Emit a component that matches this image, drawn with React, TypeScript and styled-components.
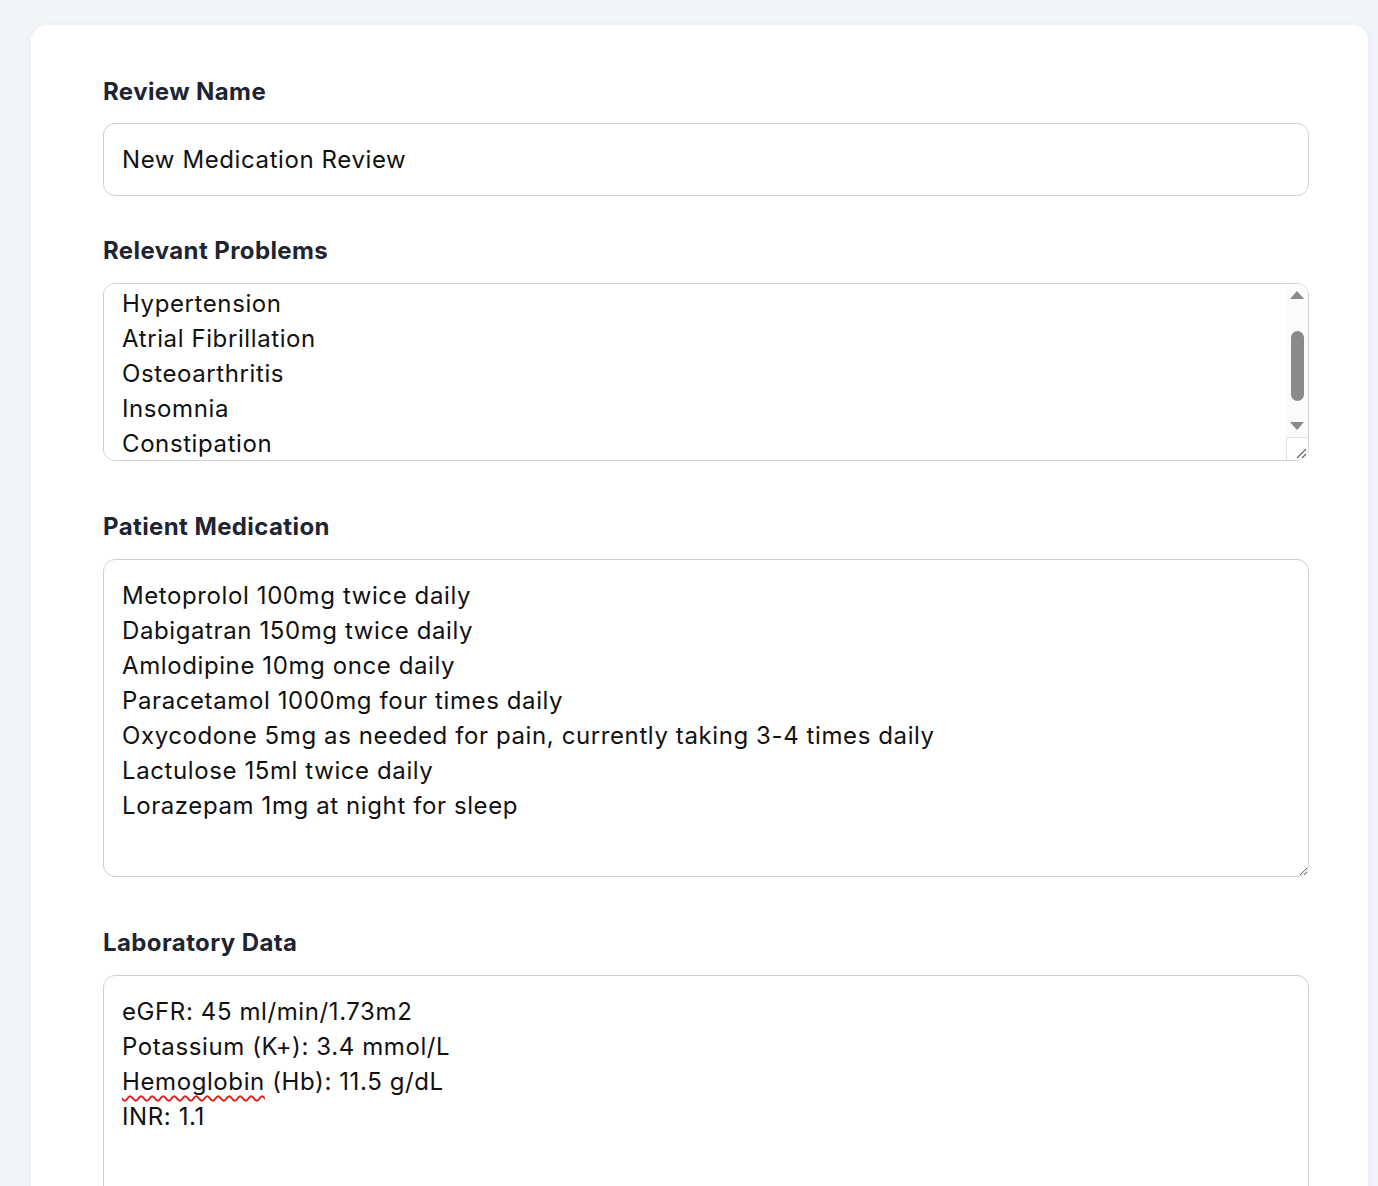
import React, { useEffect, useRef } from 'react'
import styled, { createGlobalStyle } from 'styled-components'

const GlobalStyle = createGlobalStyle`
  html, body {
    margin: 0;
    padding: 0;
    background: #f1f5f9;
    font-family: Inter, "Noto Sans", sans-serif;
    overflow: hidden;
  }
`

const Page = styled.div`
  min-height: 1186px;
  padding: 25px 10px 0 31px;
  box-sizing: border-box;
`

const Card = styled.div`
  background: #ffffff;
  border-radius: 16px 16px 0 0;
  box-shadow: 0 2px 10px rgba(15, 23, 42, 0.05);
  padding: 50px 59px 0 72px;
  min-height: 1161px;
  box-sizing: border-box;
`

const Field = styled.div`
  display: flex;
  flex-direction: column;
  margin-bottom: 38px;
`

const Label = styled.label`
  font-size: 24px;
  line-height: 33px;
  font-weight: 700;
  color: #1e2432;
  margin-bottom: 15px;
  letter-spacing: 0.4px;
`

const fieldText = `
  font-family: inherit;
  font-size: 24px;
  letter-spacing: 0.6px;
  color: #111;
`

const TextInput = styled.input`
  ${fieldText}
  height: 73px;
  box-sizing: border-box;
  border: 1px solid #cfcfcf;
  border-radius: 12px;
  padding: 0 18px;
  outline: none;
`

const ScrollWrap = styled.div`
  position: relative;
`

const TextArea = styled.textarea<{ $height?: number }>`
  ${fieldText}
  display: block;
  width: 100%;
  box-sizing: border-box;
  height: ${p => (p.$height ? `${p.$height}px` : 'auto')};
  border: 1px solid #cfcfcf;
  border-radius: 12px;
  padding: 18px 18px;
  line-height: 35px;
  outline: none;
  margin: 1px 0 11px;
  resize: vertical;
`

/* drawn scrollbar: the screenshot browser hides native ones */
const Rail = styled.div`
  position: absolute;
  top: 2px;
  right: 1px;
  width: 22px;
  height: 176px;
  display: flex;
  flex-direction: column;
  align-items: center;
  background: #fbfbfb;
  border-top-right-radius: 11px;
  pointer-events: none;
`

const ArrowButton = styled.div<{ $down?: boolean }>`
  height: 22px;
  width: 100%;
  display: flex;
  align-items: center;
  justify-content: center;

  &::after {
    content: '';
    width: 0;
    height: 0;
    border-left: 7px solid transparent;
    border-right: 7px solid transparent;
    ${p => (p.$down ? 'border-top: 8px solid #8a8a8a;' : 'border-bottom: 8px solid #8a8a8a;')}
  }
`

const Track = styled.div`
  flex: 1;
  width: 100%;
  display: flex;
  justify-content: center;
`

const Thumb = styled.div`
  margin-top: 25px;
  width: 13px;
  height: 70px;
  border-radius: 7px;
  background: #8a8a8a;
`

const Corner = styled.div`
  height: 23px;
  width: 100%;
  box-sizing: border-box;
  border-top: 1px solid #e2e2e2;
  border-left: 1px solid #e2e2e2;
  background: #ffffff;
  border-bottom-right-radius: 11px;
  display: flex;
  align-items: flex-end;
  justify-content: flex-end;
`

const LabBox = styled.div`
  ${fieldText}
  box-sizing: border-box;
  height: 318px;
  margin-top: 1px;
  border: 1px solid #cfcfcf;
  border-radius: 12px;
  padding: 18px 18px;
  line-height: 35px;
  white-space: pre-wrap;
`

const Misspelt = styled.span`
  text-decoration: underline wavy #e01b1b;
  text-decoration-thickness: 1.5px;
  text-underline-offset: 5px;
`

const Grip = () => (
  <svg width="14" height="14" viewBox="0 0 14 14">
    <path d="M12 3 L3 12 M12 8 L8 12" stroke="#666" strokeWidth="1.2" fill="none" />
  </svg>
)

const problems = [
  'Chronic Kidney Disease',
  'Chronic Pain',
  'Hypertension',
  'Atrial Fibrillation',
  'Osteoarthritis',
  'Insomnia',
  'Constipation',
].join('\n')

const medication = [
  'Metoprolol 100mg twice daily',
  'Dabigatran 150mg twice daily',
  'Amlodipine 10mg once daily',
  'Paracetamol 1000mg four times daily',
  'Oxycodone 5mg as needed for pain, currently taking 3-4 times daily',
  'Lactulose 15ml twice daily',
  'Lorazepam 1mg at night for sleep',
].join('\n')

const App = () => {
  const problemsRef = useRef<HTMLTextAreaElement>(null)

  useEffect(() => {
    if (problemsRef.current) problemsRef.current.scrollTop = 86
  }, [])

  return (
    <Page>
      <GlobalStyle />
      <Card>
        <Field>
          <Label>Review Name</Label>
          <TextInput defaultValue="New Medication Review" />
        </Field>
        <Field>
          <Label>Relevant Problems</Label>
          <ScrollWrap>
            <TextArea ref={problemsRef} $height={178} defaultValue={problems} />
            <Rail>
              <ArrowButton />
              <Track>
                <Thumb />
              </Track>
              <ArrowButton $down />
              <Corner>
                <Grip />
              </Corner>
            </Rail>
          </ScrollWrap>
        </Field>
        <Field>
          <Label>Patient Medication</Label>
          <TextArea rows={8} defaultValue={medication} />
        </Field>
        <Field>
          <Label>Laboratory Data</Label>
          <LabBox>
            {'eGFR: 45 ml/min/1.73m2\nPotassium (K+): 3.4 mmol/L\n'}
            <Misspelt>Hemoglobin</Misspelt>
            {' (Hb): 11.5 g/dL\nINR: 1.1'}
          </LabBox>
        </Field>
      </Card>
    </Page>
  )
}

export default App
